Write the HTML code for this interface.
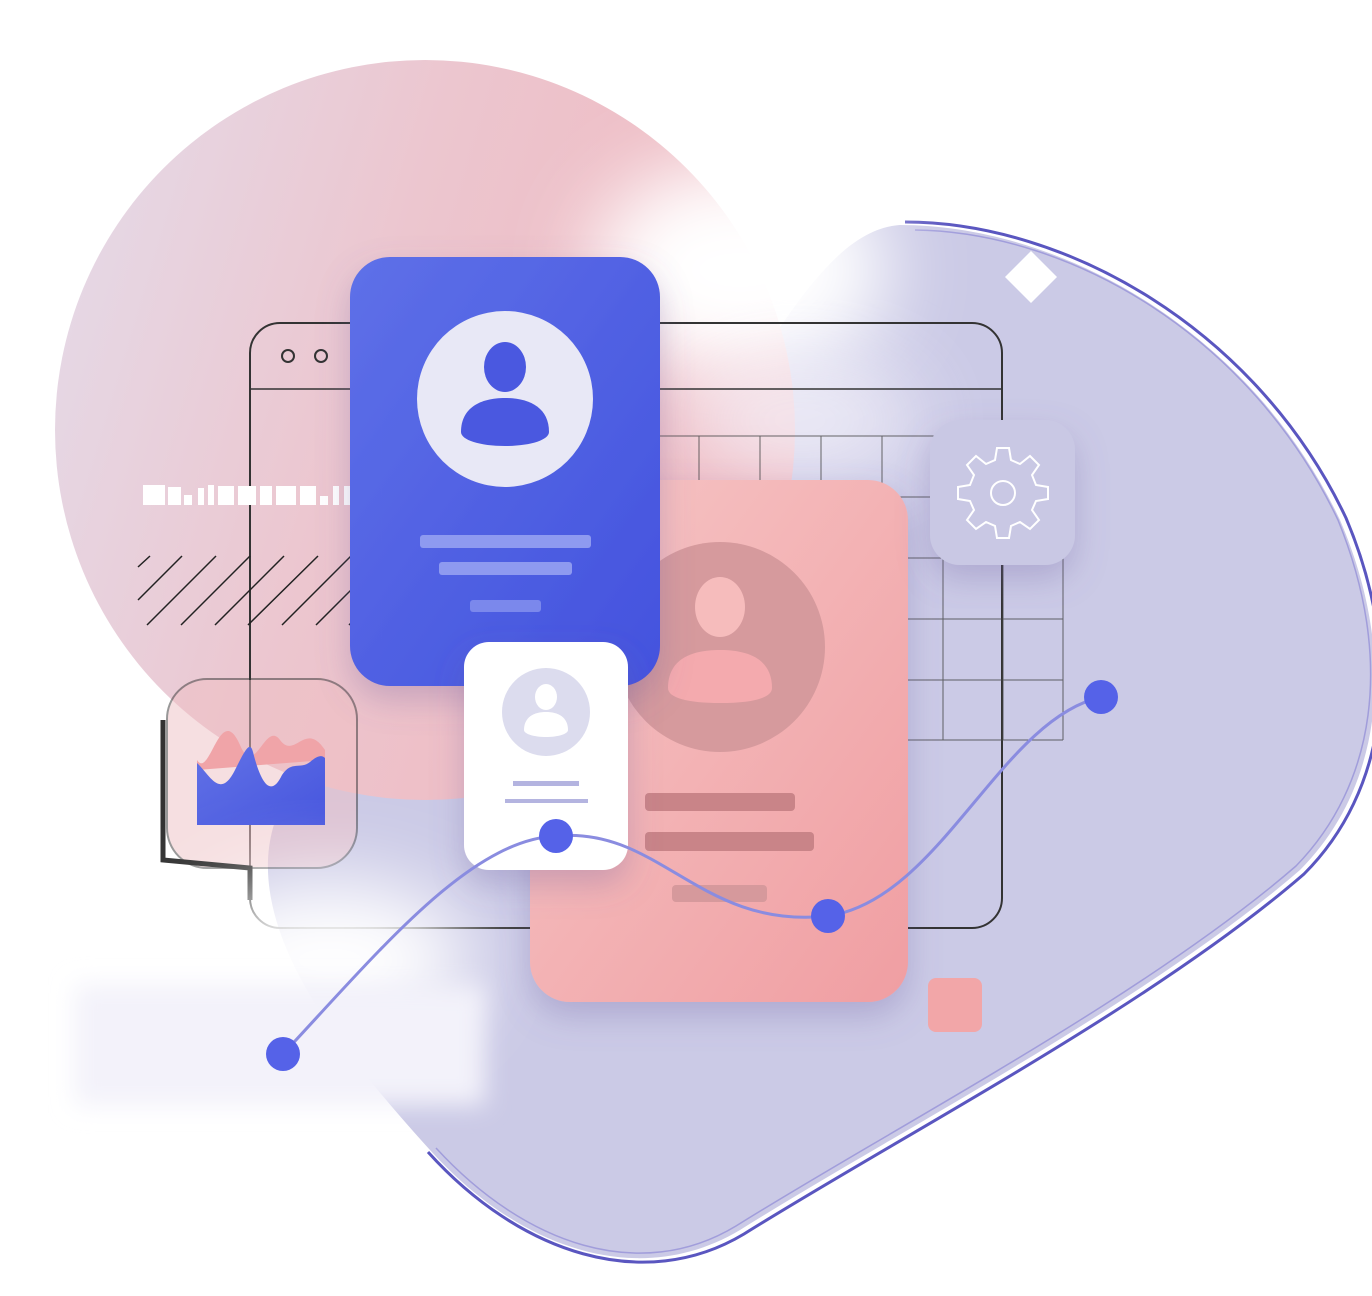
<!DOCTYPE html>
<html><head><meta charset="utf-8"><style>html,body{margin:0;padding:0;background:#fff}svg{display:block}</style></head>
<body>
<svg width="1372" height="1296" viewBox="0 0 1372 1296" xmlns="http://www.w3.org/2000/svg">
<defs>
<linearGradient id="pinkblob" x1="0" y1="0" x2="1" y2="0.3">
<stop offset="0" stop-color="#e4dcea"/><stop offset="0.5" stop-color="#ecc6cf"/><stop offset="1" stop-color="#f0b8bf"/></linearGradient>
<linearGradient id="blue" x1="0" y1="0" x2="1" y2="1"><stop offset="0" stop-color="#5e70e8"/><stop offset="1" stop-color="#4352de"/></linearGradient>
<linearGradient id="pink" x1="0" y1="0" x2="1" y2="1"><stop offset="0" stop-color="#f6c6c6"/><stop offset="1" stop-color="#f09ea2"/></linearGradient>
<linearGradient id="chart" x1="0" y1="0" x2="1" y2="1"><stop offset="0" stop-color="#6272e6"/><stop offset="1" stop-color="#4655de"/></linearGradient>
<filter id="blur40" x="-50%" y="-50%" width="200%" height="200%"><feGaussianBlur stdDeviation="40"/></filter>
<filter id="blur20" x="-50%" y="-50%" width="200%" height="200%"><feGaussianBlur stdDeviation="12"/></filter>
<filter id="sh" x="-30%" y="-30%" width="160%" height="160%"><feDropShadow dx="0" dy="14" stdDeviation="16" flood-color="#7060a0" flood-opacity="0.3"/></filter>
</defs>
<!-- lavender blob -->
<path d="M900 225 C1060 225 1250 330 1340 520 C1400 660 1380 790 1300 870 C1150 1000 900 1130 740 1230 C640 1290 520 1250 430 1150 C330 1040 220 900 290 790 C400 640 600 600 700 450 C780 330 830 230 900 225 Z" fill="#cbcae6"/>
<path d="M905 222 C1065 222 1256 328 1346 518 C1406 660 1386 792 1304 874 C1154 1004 904 1134 744 1234 C644 1294 520 1254 428 1152" fill="none" stroke="#5a56c0" stroke-width="3"/>
<path d="M915 230 C1070 232 1250 335 1338 520 C1395 660 1375 785 1296 866 C1146 996 896 1126 736 1226 C640 1284 525 1245 436 1148" fill="none" stroke="#8e8ad6" stroke-width="1.5" opacity="0.7"/>
<!-- pink circle blob -->
<circle cx="425" cy="430" r="370" fill="url(#pinkblob)"/>
<!-- white clouds -->
<ellipse cx="740" cy="270" rx="150" ry="110" fill="#fff" filter="url(#blur40)"/>
<ellipse cx="800" cy="420" rx="120" ry="60" fill="#f4f2fa" opacity="0.8" filter="url(#blur40)"/>
<!-- browser window -->
<rect x="250" y="323" width="752" height="605" rx="30" fill="none" stroke="#333" stroke-width="2"/>
<line x1="250" y1="389" x2="1002" y2="389" stroke="#333" stroke-width="1.5"/>
<circle cx="288" cy="356" r="6" fill="none" stroke="#333" stroke-width="2"/>
<circle cx="321" cy="356" r="6" fill="none" stroke="#333" stroke-width="2"/>
<g stroke="#444" stroke-width="1" fill="none" opacity="0.8">
<path d="M640 436H1063M640 497H1063M640 558H1063M640 619H1063M640 680H1063M640 740H1063"/>
<path d="M699 436V740M760 436V740M821 436V740M882 436V740M943 436V740M1003 436V740M1063 436V740"/>
</g>
<!-- hatch -->
<g stroke="#222" stroke-width="1.5">
<path d="M138 567L150 556M138 600L182 556M147 625L216 556M181 625L250 556M215 625L284 556M248 625L318 556M282 625L351 556M316 625L385 556M349 625L399 575M383 625L399 609"/>
</g>
<!-- dashed white bar -->
<g fill="#fff">
<rect x="143" y="485" width="22" height="20"/><rect x="168" y="487" width="13" height="18"/><rect x="184" y="495" width="8" height="10"/><rect x="198" y="488" width="6" height="17"/><rect x="208" y="485" width="6" height="20"/><rect x="218" y="486" width="16" height="19"/><rect x="238" y="486" width="18" height="19"/><rect x="260" y="486" width="12" height="19"/><rect x="276" y="486" width="20" height="19"/><rect x="300" y="486" width="16" height="19"/><rect x="320" y="496" width="8" height="9"/><rect x="333" y="486" width="6" height="19"/><rect x="344" y="486" width="8" height="19"/><rect x="356" y="486" width="12" height="19"/><rect x="373" y="485" width="22" height="20"/>
</g>
<!-- chart tile -->
<rect x="167" y="679" width="190" height="189" rx="40" fill="#efc0c4" opacity="0.5" stroke="#333" stroke-width="2"/>
<path d="M197 760 C210 780 220 700 240 745 C255 780 265 720 280 740 C295 760 305 720 325 750 L325 760 L197 770Z" fill="#f0a4a8"/>
<path d="M197 763 C210 775 220 800 235 770 C245 750 250 740 253 752 C260 780 270 800 282 775 C292 760 300 770 310 762 C318 755 322 755 325 758 L325 825 L197 825Z" fill="url(#chart)"/>
<path d="M163 720 L163 860 L250 868 L250 900" fill="none" stroke="#333" stroke-width="5"/>
<!-- bottom cloud -->
<ellipse cx="330" cy="960" rx="140" ry="80" fill="#fff" filter="url(#blur40)"/>
<rect x="75" y="985" width="410" height="120" fill="#f3f2fa" filter="url(#blur20)"/>
<!-- pink card -->
<rect x="530" y="480" width="378" height="522" rx="40" fill="url(#pink)" filter="url(#sh)"/>
<circle cx="720" cy="647" r="105" fill="#d69a9d"/>
<ellipse cx="720" cy="607" rx="25" ry="30" fill="#f6bcbc"/>
<path d="M668 688 C668 660 690 650 720 650 C750 650 772 660 772 688 C772 698 752 703 720 703 C688 703 668 698 668 688Z" fill="#f4aaae"/>
<rect x="645" y="793" width="150" height="18" rx="4" fill="#c98488"/>
<rect x="645" y="832" width="169" height="19" rx="4" fill="#c98488"/>
<rect x="672" y="885" width="95" height="17" rx="4" fill="#d6999c"/>
<!-- gear tile -->
<rect x="930" y="420" width="145" height="145" rx="30" fill="#c9c8e4" filter="url(#sh)"/>
<g transform="translate(1003,493)" fill="none" stroke="#fff" stroke-width="2">
<path d="M-6 -45 L6 -45 L8 -33 L17 -29 L27 -37 L36 -28 L29 -18 L33 -8 L45 -6 L45 6 L33 8 L29 17 L36 27 L27 36 L17 29 L8 33 L6 45 L-6 45 L-8 33 L-17 29 L-27 36 L-36 27 L-29 17 L-33 8 L-45 6 L-45 -6 L-33 -8 L-29 -18 L-36 -28 L-27 -37 L-17 -29 L-8 -33Z"/>
<circle r="12"/>
</g>
<!-- blue card -->
<rect x="350" y="257" width="310" height="429" rx="40" fill="url(#blue)" filter="url(#sh)"/>
<circle cx="505" cy="399" r="88" fill="#e8e8f6"/>
<ellipse cx="505" cy="367" rx="21" ry="25" fill="#4a58e0"/>
<path d="M461 432 C461 408 480 398 505 398 C530 398 549 408 549 432 C549 440 530 446 505 446 C480 446 461 440 461 432Z" fill="#4a58e0"/>
<rect x="420" y="535" width="171" height="13" rx="3" fill="#8e9af0"/>
<rect x="439" y="562" width="133" height="13" rx="3" fill="#8e9af0"/>
<rect x="470" y="600" width="71" height="12" rx="3" fill="#7b88ec"/>
<!-- white small card -->
<rect x="464" y="642" width="164" height="228" rx="25" fill="#fff" filter="url(#sh)"/>
<circle cx="546" cy="712" r="44" fill="#dcdcee"/>
<ellipse cx="546" cy="697" rx="11" ry="13" fill="#fff"/>
<path d="M524 730 C524 717 534 712 546 712 C558 712 568 717 568 730 C568 734 558 737 546 737 C534 737 524 734 524 730Z" fill="#fff"/>
<rect x="513" y="781" width="66" height="5" fill="#b4b4e0"/>
<rect x="505" y="799" width="83" height="4" fill="#b4b4e0"/>
<!-- curve -->
<path d="M283 1054 C380 950 470 840 556 836 C660 826 700 930 828 916 C940 900 1000 720 1101 697" fill="none" stroke="#8a8ce0" stroke-width="3"/>
<g fill="#5562e8"><circle cx="283" cy="1054" r="17"/><circle cx="556" cy="836" r="17"/><circle cx="828" cy="916" r="17"/><circle cx="1101" cy="697" r="17"/></g>
<!-- pink square and diamond -->
<rect x="928" y="978" width="54" height="54" rx="8" fill="#f2a6a8"/>
<path d="M1031 251 L1057 277 L1031 303 L1005 277Z" fill="#fff"/>
</svg>
</body></html>
